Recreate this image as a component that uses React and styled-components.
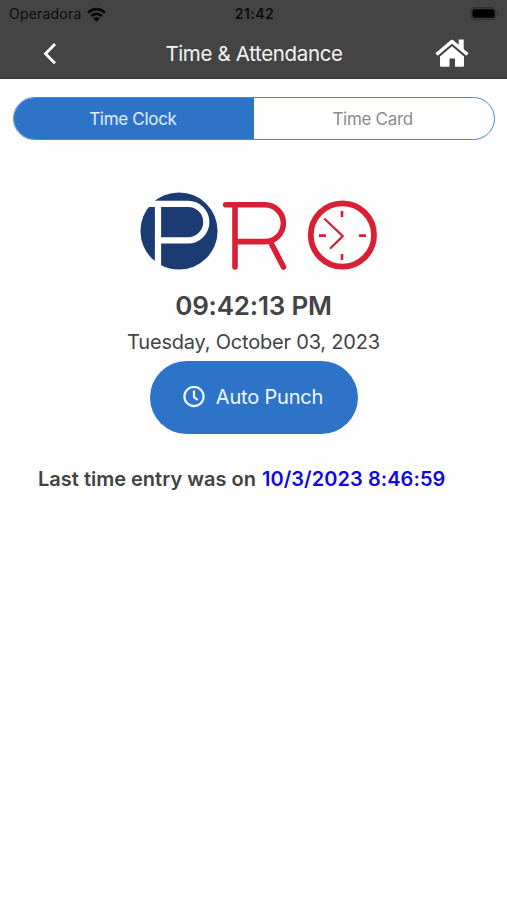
import React from 'react';
import styled, { createGlobalStyle } from 'styled-components';

const GlobalStyle = createGlobalStyle`
  * { box-sizing: border-box; }
  body { margin: 0; background: #fefefe; font-family: Inter, "Liberation Sans", sans-serif; }
`;

const Screen = styled.div`
  min-height: 900px;
  display: flex;
  flex-direction: column;
  background: #fefefe;
  color: #434343;
`;

const Header = styled.header`
  height: 79px;
  background: #444444;
  border-bottom: 1px solid #3b3b3b;
`;

const StatusBar = styled.div`
  height: 28px;
  display: grid;
  grid-template-columns: 1fr auto 1fr;
  align-items: center;
  padding: 0 7px 0 9px;
  color: #0c0c0c;
`;

const Carrier = styled.div`
  display: flex;
  align-items: center;
  gap: 6px;
`;

const Label = styled.span`
  font-size: ${(p) => p.$size}px;
  font-weight: ${(p) => p.$weight || 400};
  letter-spacing: ${(p) => p.$track || 0}px;
  line-height: ${(p) => p.$line || 28}px;
  color: ${(p) => p.$color || 'inherit'};
  white-space: nowrap;
`;

const Battery = styled.svg`
  justify-self: end;
  display: block;
`;

const NavBar = styled.nav`
  height: 51px;
  display: grid;
  grid-template-columns: 1fr auto 1fr;
  align-items: center;
  padding: 1px 38px 0 42px;
`;

const IconButton = styled.button`
  display: flex;
  padding: 0;
  border: 0;
  background: none;
  color: #fff;
  justify-self: ${(p) => p.$side};
  margin-bottom: ${(p) => (p.$side === 'end' ? 2 : 0)}px;
`;

const Title = styled.div`
  margin-right: 3px;
`;

const Tabs = styled.div`
  display: flex;
  height: 43px;
  margin: 18px 12.5px 0 13px;
  border: 1px solid #4a86d2;
  border-radius: 22px;
  overflow: hidden;
`;

const Tab = styled.button`
  flex: 1;
  padding: 0 2px 0 0;
  border: 0;
  font-family: inherit;
  background: ${(p) => (p.$active ? '#2d73c7' : 'transparent')};
  color: ${(p) => (p.$active ? '#e4effc' : '#8b8b8b')};
`;

const Main = styled.main`
  display: flex;
  flex-direction: column;
  align-items: center;
  padding-top: 50px;
`;

const Logo = styled.svg`
  display: block;
  margin-left: 11px;
`;

const Clock = styled.div`
  display: flex;
  flex-direction: column;
  align-items: center;
  padding-top: 14px;
`;

const PunchButton = styled.button`
  display: flex;
  align-items: center;
  justify-content: center;
  gap: 11px;
  width: 208px;
  height: 73px;
  margin-top: 2px;
  padding: 0 1px 2px 0;
  border: 0;
  border-radius: 37px;
  background: #2d73c7;
  color: #f2f8ff;
  font-family: inherit;
`;

const LastEntry = styled.p`
  align-self: stretch;
  margin: 31px 0 0;
  padding-left: 38px;
  display: flex;
  gap: 6px;
`;

export default function App() {
  return (
    <Screen>
      <GlobalStyle />
      <Header>
        <StatusBar>
          <Carrier>
            <Label $size={14} $track={0.2}>Operadora</Label>
            <svg width="19" height="15" viewBox="0 0 18 14" fill="none" stroke="#080808" strokeWidth="2.6">
              <path d="M1 5.3C5.6.8 12.4.8 17 5.3" />
              <path d="M4 8.5C6.8 5.8 11.2 5.8 14 8.5" />
              <path d="M9 13.8L5.9 10.7C7.5 9.1 10.5 9.1 12.1 10.7Z" fill="#080808" stroke="none" />
            </svg>
          </Carrier>
          <Label $size={14} $weight={600} $track={0.45}>21:42</Label>
          <Battery width="30" height="14" viewBox="0 0 30 14">
            <rect x=".8" y=".4" width="25" height="12.2" rx="4" fill="#3a3a3a" stroke="#303030" />
            <rect x="2.5" y="2.2" width="22" height="8.6" rx="2.5" fill="#000" />
            <path d="M27.4 4.4Q30.4 6.6 27.4 8.8Z" fill="#303030" />
          </Battery>
        </StatusBar>
        <NavBar>
          <IconButton $side="start" aria-label="Back">
            <svg width="16" height="22" viewBox="0 0 16 22" fill="none" stroke="currentColor" strokeWidth="2.8">
              <path d="M13 1L3.5 10.7L13 20.2" />
            </svg>
          </IconButton>
          <Title><Label $size={20.5} $track={-0.35} $color="#f4f4f4">Time &amp; Attendance</Label></Title>
          <IconButton $side="end" aria-label="Home">
            <svg width="34" height="28" viewBox="0 0 34 28">
              <path d="M17 7.2L29 17.4V26.5Q29 27.8 27.7 27.8H20V19.5H14.5V27.8H6.3Q5 27.8 5 26.5V17.4Z" fill="currentColor" />
              <path d="M23.7 7V.6H28.7V11.3Z" fill="currentColor" />
              <path d="M1.5 15.5L17 2.4L32.5 15.5" fill="none" stroke="currentColor" strokeWidth="3.4" strokeLinejoin="round" />
            </svg>
          </IconButton>
        </NavBar>
      </Header>
      <Tabs>
        <Tab $active><Label $size={17} $track={-0.3}>Time Clock</Label></Tab>
        <Tab><Label $size={17} $track={-0.3}>Time Card</Label></Tab>
      </Tabs>
      <Main>
        <Logo width="240" height="82" viewBox="139 190 240 82" fill="none" aria-label="PRO">
          <circle cx="179" cy="231" r="38.6" fill="#1d3b73" />
          <path d="M139 203.8H188A18.2 18.2 0 0 1 188 240.4H158V273" stroke="#fefefe" strokeWidth="6.2" />
          <path d="M158 204V240" stroke="#fefefe" strokeWidth="6.2" />
          <g stroke="#d91f34" strokeLinecap="round" strokeLinejoin="round">
            <path d="M225.7 204.8H265A18.4 18.4 0 0 1 265 241.6H235M235 204.8V267M270.5 242L283.5 267" strokeWidth="5.6" />
            <circle cx="342.4" cy="235" r="31.6" strokeWidth="5.8" />
            <path d="M325 219.2L342.8 236.1L330.7 248" strokeWidth="2.2" />
            <path d="M342 211V217M342 254V260M319 235.6H326M359 235.6H366" strokeWidth="2.6" strokeLinecap="butt" />
          </g>
        </Logo>
        <Clock>
          <Label $size={26} $weight={600} $track={-0.2} $line={40}>09:42:13 PM</Label>
          <Label $size={20} $track={-0.2} $line={33}>Tuesday, October 03, 2023</Label>
        </Clock>
        <PunchButton>
          <svg width="22" height="22" viewBox="0 0 22 22" fill="none" stroke="currentColor" strokeWidth="2.2">
            <circle cx="11" cy="10.5" r="9.6" />
            <path d="M11 4.5V11.1L14.7 13.8" />
          </svg>
          <Label $size={20} $track={-0.2}>Auto Punch</Label>
        </PunchButton>
        <LastEntry>
          <Label $size={20} $weight={600}>Last time entry was on</Label>
          <Label $size={20} $weight={600} $track={0.06} $color="#1009df">10/3/2023 8:46:59</Label>
        </LastEntry>
      </Main>
    </Screen>
  );
}
